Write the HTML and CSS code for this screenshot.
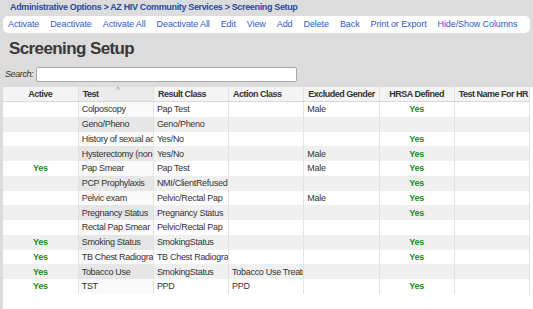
FILE: index.html
```html
<!DOCTYPE html>
<html lang="en">
<head>
    <meta charset="UTF-8">
    <title>Screening Setup</title>
    <link rel="stylesheet" href="styles.css">
</head>
<body>

    <div class="breadcrumb">
        <a href="#">Administrative Options</a> &gt;
        <a href="#">AZ HIV Community Services</a> &gt;
        <a href="#">Screening Setup</a>
    </div>

    <div class="toolbar">
        <a href="#">Activate</a>
        <a href="#">Deactivate</a>
        <a href="#">Activate All</a>
        <a href="#">Deactivate All</a>
        <a href="#">Edit</a>
        <a href="#">View</a>
        <a href="#">Add</a>
        <a href="#">Delete</a>
        <a href="#">Back</a>
        <a href="#">Print or Export</a>
        <a href="#">Hide/Show Columns</a>
    </div>

    <h1 class="title">Screening Setup</h1>

    <div class="search">
        <label for="search">Search:</label>
        <input type="text" id="search">
    </div>

    <div class="grid-wrap">
        <table class="grid">
            <thead>
                <tr>
                    <th class="center">Active</th>
                    <th class="sorted">Test <span class="sort-arrow">&#708;</span></th>
                    <th>Result Class</th>
                    <th>Action Class</th>
                    <th>Excluded Gender</th>
                    <th class="center">HRSA Defined</th>
                    <th>Test Name For HR</th>
                </tr>
            </thead>
            <tbody>
                <tr>
                    <td class="yes"></td><td class="sorted">Colposcopy</td><td>Pap Test</td><td></td><td>Male</td><td class="yes">Yes</td><td></td>
                </tr>
                <tr>
                    <td class="yes"></td><td class="sorted">Geno/Pheno</td><td>Geno/Pheno</td><td></td><td></td><td class="yes"></td><td></td>
                </tr>
                <tr>
                    <td class="yes"></td><td class="sorted">History of sexual activity</td><td>Yes/No</td><td></td><td></td><td class="yes">Yes</td><td></td>
                </tr>
                <tr>
                    <td class="yes"></td><td class="sorted">Hysterectomy (non-cancer)</td><td>Yes/No</td><td></td><td>Male</td><td class="yes">Yes</td><td></td>
                </tr>
                <tr>
                    <td class="yes">Yes</td><td class="sorted">Pap Smear</td><td>Pap Test</td><td></td><td>Male</td><td class="yes">Yes</td><td></td>
                </tr>
                <tr>
                    <td class="yes"></td><td class="sorted">PCP Prophylaxis</td><td>NMI/ClientRefused</td><td></td><td></td><td class="yes">Yes</td><td></td>
                </tr>
                <tr>
                    <td class="yes"></td><td class="sorted">Pelvic exam</td><td>Pelvic/Rectal Pap</td><td></td><td>Male</td><td class="yes">Yes</td><td></td>
                </tr>
                <tr>
                    <td class="yes"></td><td class="sorted">Pregnancy Status</td><td>Pregnancy Status</td><td></td><td></td><td class="yes">Yes</td><td></td>
                </tr>
                <tr>
                    <td class="yes"></td><td class="sorted">Rectal Pap Smear</td><td>Pelvic/Rectal Pap</td><td></td><td></td><td class="yes"></td><td></td>
                </tr>
                <tr>
                    <td class="yes">Yes</td><td class="sorted">Smoking Status</td><td>SmokingStatus</td><td></td><td></td><td class="yes">Yes</td><td></td>
                </tr>
                <tr>
                    <td class="yes">Yes</td><td class="sorted">TB Chest Radiograph</td><td>TB Chest Radiograph</td><td></td><td></td><td class="yes">Yes</td><td></td>
                </tr>
                <tr>
                    <td class="yes">Yes</td><td class="sorted">Tobacco Use</td><td>SmokingStatus</td><td>Tobacco Use Treatment</td><td></td><td class="yes"></td><td></td>
                </tr>
                <tr>
                    <td class="yes">Yes</td><td class="sorted">TST</td><td>PPD</td><td>PPD</td><td></td><td class="yes">Yes</td><td></td>
                </tr>
            </tbody>
        </table>
    </div>

</body>
</html>
```

FILE: styles.css
```css
body {
    font-family: 'Liberation Sans', Arial, sans-serif;
    font-size: 9px;
    color: #333;
    background-color: #dcdcdc;
    margin: 0;
    overflow: hidden;
}
a {
    text-decoration: none;
}
.breadcrumb {
    height: 16px;
    line-height: 15px;
    padding-left: 10px;
    font-size: 9px;
    font-weight: bold;
    letter-spacing: -0.35px;
    color: #2a4a9c;
    white-space: nowrap;
}
.breadcrumb a {
    color: #2a4a9c;
}
.toolbar {
    display: flex;
    gap: 11px;
    margin: 0 3px;
    padding: 0 5px;
    height: 17px;
    line-height: 17px;
    font-size: 9px;
    letter-spacing: -0.1px;
    white-space: nowrap;
    background-color: #fff;
    border-radius: 5px;
}
.toolbar a {
    color: #2f5bc8;
}
.title {
    margin: 0;
    padding: 4px 9px 0;
    height: 24px;
    font-size: 17px;
    line-height: 23px;
    letter-spacing: -0.6px;
    font-weight: bold;
    color: #383838;
}
.search {
    display: flex;
    align-items: center;
    gap: 3px;
    height: 26px;
    padding: 0 5px;
    font-style: italic;
    letter-spacing: -0.4px;
}
.search input {
    box-sizing: border-box;
    width: 261px;
    height: 15px;
    padding: 0 2px;
    border: 1px solid #a8a8a8;
    border-radius: 2px;
    background-color: #fff;
}
.grid-wrap {
    margin-left: 3px;
    background-color: #fff;
    height: 230px;
}
.grid {
    border-collapse: collapse;
    table-layout: fixed;
    width: 527px;
}
.grid th,
.grid td {
    height: 14.75px;
    padding: 0 3px;
    border-right: 1px solid #e2e2e2;
    white-space: nowrap;
    overflow: hidden;
    text-align: left;
    line-height: 14px;
    letter-spacing: -0.3px;
}
.grid th {
    position: relative;
    height: 14px;
    background-color: #f4f4f4;
    border-bottom: 1px solid #d8d8d8;
    font-weight: bold;
    letter-spacing: -0.5px;
    color: #333;
    padding: 0 4px;
}
.grid .center,
.grid .yes {
    text-align: center;
}
.grid .yes {
    font-weight: bold;
    color: #1b8a1b;
}
.grid th.sorted {
    background-color: #ebebeb;
}
.sort-arrow {
    position: absolute;
    top: -5px;
    left: 50%;
    font-size: 8px;
    font-weight: normal;
    color: #999;
}
.grid td.sorted {
    background-color: #fafafa;
}
.grid tbody tr:nth-child(even) td {
    background-color: #f0f0f0;
}
.grid tbody tr:nth-child(even) td.sorted {
    background-color: #e6e6e6;
}
```
